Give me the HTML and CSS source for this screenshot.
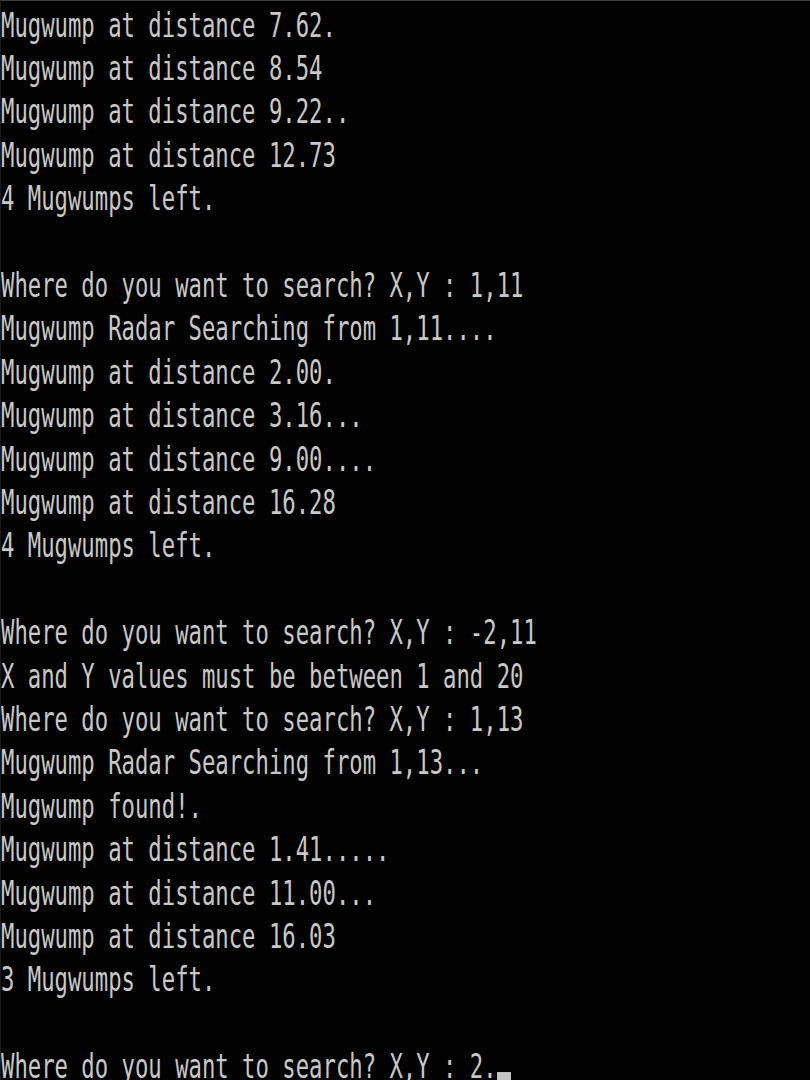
FILE: index.html
```html
<!DOCTYPE html>
<html>
<head>
<meta charset="utf-8">
<link rel="stylesheet" href="styles.css">
</head>
<body>
<div class="console">
<div class="screen"><div class="line">Mugwump at distance 7.62.</div><div class="line">Mugwump at distance 8.54</div><div class="line">Mugwump at distance 9.22..</div><div class="line">Mugwump at distance 12.73</div><div class="line">4 Mugwumps left.</div><div class="line"> </div><div class="line">Where do you want to search? X,Y : 1,11</div><div class="line">Mugwump Radar Searching from 1,11....</div><div class="line">Mugwump at distance 2.00.</div><div class="line">Mugwump at distance 3.16...</div><div class="line">Mugwump at distance 9.00....</div><div class="line">Mugwump at distance 16.28</div><div class="line">4 Mugwumps left.</div><div class="line"> </div><div class="line">Where do you want to search? X,Y : -2,11</div><div class="line">X and Y values must be between 1 and 20</div><div class="line">Where do you want to search? X,Y : 1,13</div><div class="line">Mugwump Radar Searching from 1,13...</div><div class="line">Mugwump found!.</div><div class="line">Mugwump at distance 1.41.....</div><div class="line">Mugwump at distance 11.00...</div><div class="line">Mugwump at distance 16.03</div><div class="line">3 Mugwumps left.</div><div class="line"> </div><div class="line">Where do you want to search? X,Y : 2.<span class="cursor"></span></div></div>
</div>
</body>
</html>
```
FILE: styles.css
```css
html, body {
  margin: 0;
  padding: 0;
  background: #000;
  height: 100%;
  overflow: hidden;
}
.console {
  width: 810px;
  height: 1080px;
  box-sizing: border-box;
  border-top: 1px solid #3c3c3c;
  border-left: 1px solid #1a1a1a;
  background: #020202;
  overflow: hidden;
}
.screen {
  font-family: "DejaVu Sans Mono", "Liberation Mono", monospace;
  font-size: 22.26px;
  line-height: 28px;
  color: #c8c8c8;
  padding-top: 1px;
  transform: scaleY(1.55);
  transform-origin: 0 0;
  white-space: pre;
}
.line {
  height: 28px;
}
.cursor {
  display: inline-block;
  width: 14px;
  height: 6px;
  background: #c4c4c4;
  vertical-align: -2px;
}
```
